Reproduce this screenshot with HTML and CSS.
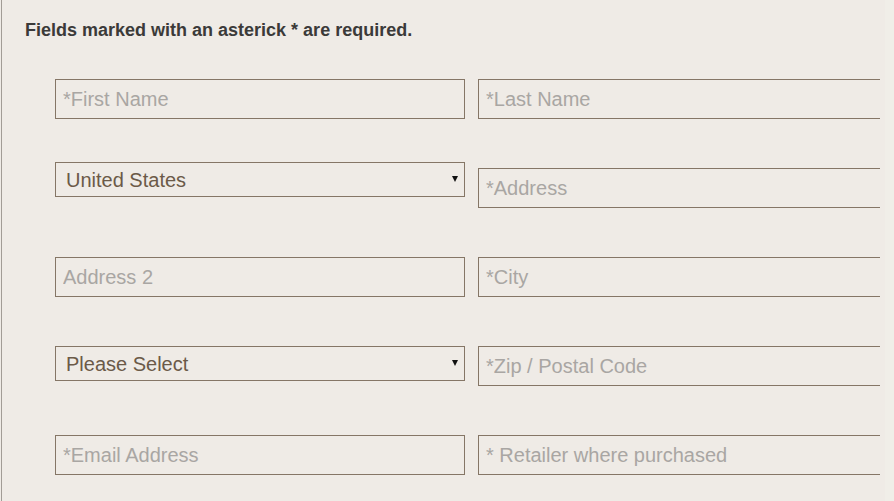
FILE: index.html
```html
<!DOCTYPE html>
<html lang="en">
<head>
<meta charset="utf-8">
<title>Form</title>
<link rel="stylesheet" href="styles.css">
</head>
<body>
<div class="page">
  <div class="panel">
    <p class="note">Fields marked with an asterick * are required.</p>
    <form class="form">
      <input class="field" type="text" placeholder="*First Name">
      <input class="field" type="text" placeholder="*Last Name">
      <div class="select-wrap select-wrap--raised">
        <select class="select">
          <option>United States</option>
        </select>
      </div>
      <input class="field" type="text" placeholder="*Address">
      <input class="field" type="text" placeholder="Address 2">
      <input class="field" type="text" placeholder="*City">
      <div class="select-wrap">
        <select class="select">
          <option>Please Select</option>
        </select>
      </div>
      <input class="field" type="text" placeholder="*Zip / Postal Code">
      <input class="field" type="text" placeholder="*Email Address">
      <input class="field" type="text" placeholder="* Retailer where purchased">
    </form>
  </div>
  <div class="strip"></div>
</div>
</body>
</html>
```
FILE: styles.css
```css
html, body {
  margin: 0;
  padding: 0;
  height: 100%;
  background: #efebe6;
  font-family: "Liberation Sans", Arial, sans-serif;
}

.page {
  display: flex;
  height: 100%;
}

.panel {
  box-sizing: border-box;
  width: 879px;
  margin-left: 1px;
  border-left: 1px solid #a29c96;
  padding: 20px 0 0 23px;
  overflow: hidden;
  flex-shrink: 0;
}

.strip {
  flex: 1;
  margin-left: 5px;
  background: #f0eee8;
}

.note {
  margin: 0;
  font-size: 18px;
  line-height: 21px;
  font-weight: bold;
  color: #3b3a39;
}

.form {
  display: grid;
  grid-template-columns: 410px 410px;
  grid-auto-rows: 40px;
  column-gap: 13px;
  row-gap: 49px;
  align-items: start;
  margin: 38px 0 0 30px;
}

.field {
  box-sizing: border-box;
  width: 410px;
  height: 40px;
  margin: 0;
  padding: 0 7px;
  border: 1px solid #857666;
  border-radius: 0;
  background: transparent;
  font-family: "Liberation Sans", Arial, sans-serif;
  font-size: 20px;
  color: #6b5b4b;
  outline: none;
}

.field::placeholder {
  color: #a9a6a3;
  opacity: 1;
}

.select-wrap {
  position: relative;
  width: 410px;
  height: 35px;
}

.select-wrap--raised {
  margin-top: -6px;
}

.select-wrap::after {
  content: "";
  position: absolute;
  right: 7px;
  top: 14px;
  border-left: 3px solid transparent;
  border-right: 3px solid transparent;
  border-top: 6px solid #111;
  pointer-events: none;
}

.select {
  box-sizing: border-box;
  width: 410px;
  height: 35px;
  margin: 0;
  padding: 1px 0 0 10px;
  border: 1px solid #857666;
  border-radius: 0;
  background: transparent;
  -webkit-appearance: none;
  appearance: none;
  font-family: "Liberation Sans", Arial, sans-serif;
  font-size: 20px;
  color: #6b5a48;
  outline: none;
}
```
